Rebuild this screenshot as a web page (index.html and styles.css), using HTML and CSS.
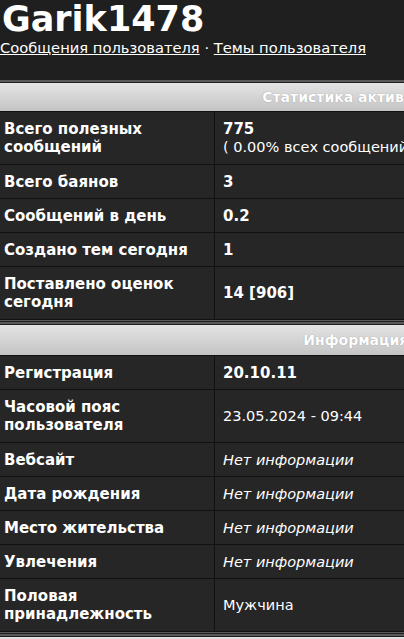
FILE: index.html
```html
<!DOCTYPE html>
<html lang="ru">
<head>
<meta charset="utf-8">
<title>Garik1478</title>
<link rel="stylesheet" href="styles.css">
</head>
<body>
<div class="page">
  <h1 class="username">Garik1478</h1>
  <div class="links"><a href="#">Сообщения пользователя</a> · <a href="#">Темы пользователя</a></div>

  <div class="section">
    <table class="info">
      <tr><th class="band" colspan="2">Статистика активности</th></tr>
      <tr class="two"><td class="label">Всего полезных сообщений</td><td class="value top"><b>775</b><br>( 0.00% всех сообщений )</td></tr>
      <tr><td class="label">Всего баянов</td><td class="value"><b>3</b></td></tr>
      <tr><td class="label">Сообщений в день</td><td class="value"><b>0.2</b></td></tr>
      <tr><td class="label">Создано тем сегодня</td><td class="value"><b>1</b></td></tr>
      <tr class="two"><td class="label">Поставлено оценок сегодня</td><td class="value"><b>14 [906]</b></td></tr>
    </table>
  </div>

  <div class="section">
    <table class="info">
      <tr><th class="band band2" colspan="2">Информация</th></tr>
      <tr><td class="label">Регистрация</td><td class="value"><b>20.10.11</b></td></tr>
      <tr class="two"><td class="label">Часовой пояс пользователя</td><td class="value">23.05.2024 - 09:44</td></tr>
      <tr><td class="label">Вебсайт</td><td class="value"><i>Нет информации</i></td></tr>
      <tr><td class="label">Дата рождения</td><td class="value"><i>Нет информации</i></td></tr>
      <tr><td class="label">Место жительства</td><td class="value"><i>Нет информации</i></td></tr>
      <tr><td class="label">Увлечения</td><td class="value"><i>Нет информации</i></td></tr>
      <tr class="two"><td class="label">Половая принадлежность</td><td class="value">Мужчина</td></tr>
    </table>
  </div>

  <div class="section">
    <table class="info">
      <tr><th class="band" colspan="2">Подпись</th></tr>
    </table>
  </div>
</div>
</body>
</html>
```

FILE: styles.css
```css
html, body {
  margin: 0;
  padding: 0;
  background: #1f1f1f;
}
body {
  font-family: "DejaVu Sans", Verdana, sans-serif;
  color: #fff;
}
.page {
  width: 404px;
  overflow: hidden;
}
.username {
  margin: 0;
  padding: 0 0 0 2px;
  font-size: 35px;
  line-height: 38px;
  font-weight: bold;
  color: #fff;
}
.links {
  font-size: 14.7px;
  line-height: 20px;
  margin-bottom: 22px;
  white-space: nowrap;
}
.links a {
  color: #fff;
  text-decoration: underline;
}
.section {
  width: 712px;
  border-top: 2px solid #5a5a5a;
  padding-top: 1px;
  border-bottom: 1px solid #5a5a5a;
  margin-bottom: 1px;
}
.info {
  width: 712px;
  border-collapse: collapse;
  font-size: 14.5px;
  line-height: 18px;
}
.band {
  height: 28px;
  padding: 0;
  background: linear-gradient(#e4e4e4, #c4c4c4);
  color: #fff;
  font-size: 14px;
  font-weight: bold;
  text-align: center;
  text-shadow: 0 0 1px rgba(0, 0, 0, 0.35);
  border-bottom: 1px solid #111;
}
.band2 {
  height: 30px;
}
.info td {
  background: #262626;
  border: 1px solid #111;
  padding: 7.5px 8px;
  vertical-align: middle;
  white-space: nowrap;
}
.info tr.two td {
  padding-top: 8px;
  padding-bottom: 8px;
}
.info td.label {
  width: 202px;
  padding-left: 4px;
  font-size: 15px;
  font-weight: bold;
  border-left: none;
  white-space: normal;
}
.info td.value b {
  font-size: 15px;
}
.info td.value.top {
  vertical-align: top;
}
```
